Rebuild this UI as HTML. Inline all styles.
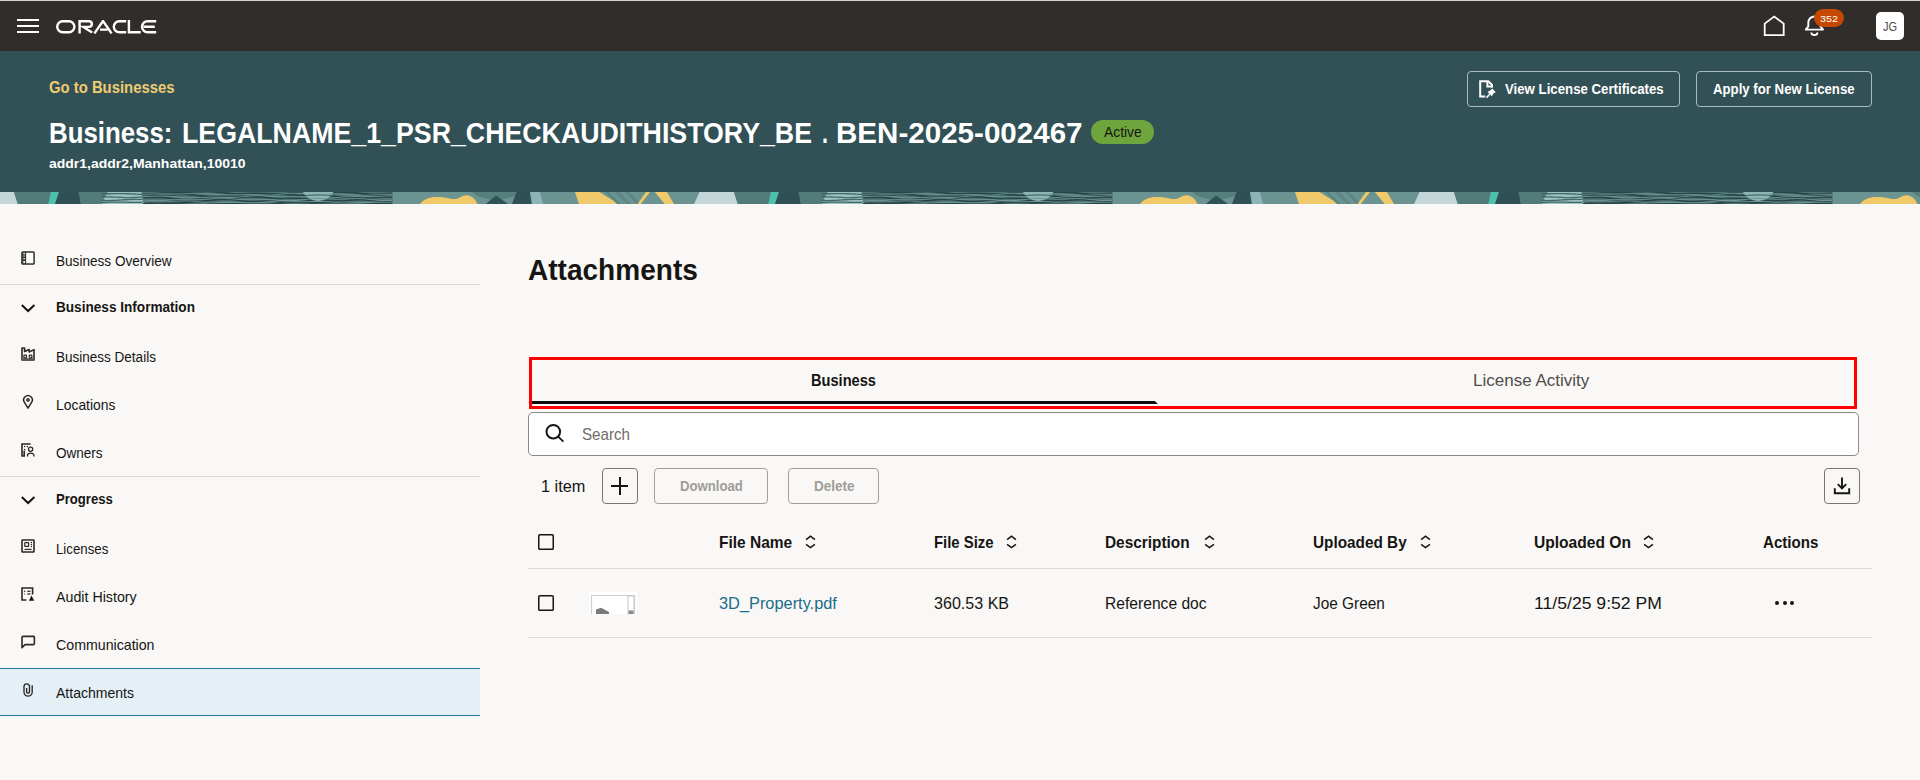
<!DOCTYPE html>
<html><head><meta charset="utf-8"><style>
html,body{margin:0;padding:0}
body{width:1920px;height:780px;overflow:hidden;position:relative;background:#f9f8f6;font-family:"Liberation Sans",sans-serif}
.t{position:absolute;white-space:nowrap;line-height:normal;transform-origin:0 0;display:inline-block}
.a{position:absolute;display:block}
.box{position:absolute;box-sizing:border-box}
</style></head><body>
<div class="box" style="left:0;top:0;width:1920px;height:1px;background:#d3d3d3"></div>
<div class="box" style="left:0;top:1px;width:1920px;height:50px;background:#312d2a"></div>
<div class="box" style="left:17px;top:19px;width:22px;height:2px;background:#fff"></div>
<div class="box" style="left:17px;top:25px;width:22px;height:2px;background:#fff"></div>
<div class="box" style="left:17px;top:31px;width:22px;height:2px;background:#fff"></div>
<!-- ORACLE logo -->
<svg class="a" style="left:56px;top:20px" width="101" height="14" viewBox="0 0 101 14">
 <g fill="none" stroke="#fff" stroke-width="2.4">
  <rect x="1.2" y="1.2" width="17.2" height="11" rx="5.5"/>
  <path d="M23.6 13.4 V1.2 H33 A2.85 2.85 0 0 1 33 6.9 H27.2 L36.2 12.6"/>
  <path d="M38.4 13.4 L47 1 L55.6 13.4 M44 9.6 H51.6"/>
  <path d="M70.2 1.2 H63.3 A5.5 5.5 0 0 0 63.3 12.2 H70.2"/>
  <path d="M72.9 0 V12.2 H84.7"/>
  <path d="M100.2 1.2 H91.5 A5.5 5.5 0 0 0 91.5 12.2 H100.2 M87.6 6.7 H98.8"/>
 </g>
</svg>
<!-- home -->
<svg class="a" style="left:1763px;top:15px" width="23" height="22" viewBox="0 0 23 22">
 <path d="M1.7 20.1 V8.6 L11.2 1.6 L20.7 8.6 V20.1 Z" fill="none" stroke="#fff" stroke-width="1.8"/>
</svg>
<!-- bell -->
<svg class="a" style="left:1804px;top:14px" width="22" height="23" viewBox="0 0 22 23">
 <path d="M1.8 15.6 L4.3 12.4 V8.6 A6.1 6.1 0 0 1 16.5 8.6 V12.4 L19 15.6 Z" fill="none" stroke="#fff" stroke-width="1.9" stroke-linejoin="round"/>
 <path d="M7.4 18.4 A3 2.6 0 0 0 13.4 18.4" fill="none" stroke="#fff" stroke-width="1.9"/>
</svg>
<div class="box" style="left:1814px;top:9px;width:30px;height:18px;border-radius:9px;background:#c74800"></div>
<span class="t" style="left:1820px;top:13.2px;font-size:9.8px;color:#fff;transform:scaleX(1.1)">352</span>
<div class="box" style="left:1876px;top:12px;width:28px;height:28px;border-radius:5px;background:#fff"></div>
<span class="t" style="left:1882.8px;top:20px;font-size:12.5px;color:#4b4b4b;transform:scaleX(0.88)">JG</span>
<!-- header -->
<div class="box" style="left:0;top:51px;width:1920px;height:141px;background:#325156"></div>
<div class="box" style="left:1467px;top:71px;width:213px;height:36px;border:1px solid #a9bcbd;border-radius:4px"></div>
<div class="box" style="left:1696px;top:71px;width:176px;height:36px;border:1px solid #a9bcbd;border-radius:4px"></div>
<svg class="a" style="left:1478px;top:79px" width="19" height="20" viewBox="0 0 19 20">
 <path d="M7.3 17.6 H2.2 V2.2 H10.3 L14 5.9 V8.6" fill="none" stroke="#fff" stroke-width="2"/>
 <path d="M9.4 2.6 V7.5 H14.4" fill="none" stroke="#fff" stroke-width="2"/>
 <polygon points="14.2,9.6 17.8,13.2 15.9,14.1 13.8,17.2 9.6,13.1 12.8,11.1" fill="#fff"/>
 <path d="M11.6 15.2 L8.6 18.6" stroke="#fff" stroke-width="1.6"/>
</svg>
<div class="box" style="left:1091px;top:120px;width:63px;height:24px;border-radius:12px;background:#6ea53c"></div>
<!-- band -->
<svg class="a" style="left:0;top:192px" width="1920" height="12" viewBox="0 0 1920 12"><g transform="translate(0,0)"><rect x="0" y="0" width="720" height="12" fill="#6a9391"/><polygon points="699.8,0 734,0 737.8,12 694.2,12" fill="#c3d7d9"/><polygon points="-20.2,0 14,0 17.8,12 -25.8,12" fill="#c3d7d9"/><polygon points="14,0 51,0 48.3,12 17.8,12" fill="#527a78"/><polygon points="51,0 59,0 55,12 48.3,12" fill="#4dbfad"/><polygon points="59,0 78.7,0 81,12 55,12" fill="#2f5155"/><polygon points="78.7,0 107.8,0 101.2,12 81,12" fill="#527a78"/><polygon points="107.8,0 141.6,0 144.4,12 101.2,12" fill="#9cc0c0"/><polygon points="141.6,0 392.8,0 392.8,12 144.4,12" fill="#4d7675"/><path d="M101.0,1.67 L104.0,1.74 L107.0,1.76 L110.0,1.74 L113.0,1.70 L116.0,1.66 L119.0,1.62 L122.0,1.62 L125.0,1.65 L128.0,1.73 L131.0,1.85 L134.0,2.01 L137.0,2.18 L140.0,2.34 L143.0,2.48" stroke="#44696a" stroke-width="1.3" fill="none"/><path d="M101.0,4.74 L104.0,4.75 L107.0,4.80 L110.0,4.90 L113.0,5.03 L116.0,5.18 L119.0,5.33 L122.0,5.46 L125.0,5.55 L128.0,5.59 L131.0,5.56 L134.0,5.48 L137.0,5.34 L140.0,5.17 L143.0,4.99" stroke="#44696a" stroke-width="1.3" fill="none"/><path d="M101.0,8.43 L104.0,8.51 L107.0,8.55 L110.0,8.53 L113.0,8.45 L116.0,8.31 L119.0,8.13 L122.0,7.94 L125.0,7.75 L128.0,7.59 L131.0,7.47 L134.0,7.40 L137.0,7.38 L140.0,7.40 L143.0,7.45" stroke="#44696a" stroke-width="1.3" fill="none"/><path d="M101.0,10.69 L104.0,10.50 L107.0,10.32 L110.0,10.18 L113.0,10.10 L116.0,10.07 L119.0,10.08 L122.0,10.14 L125.0,10.22 L128.0,10.30 L131.0,10.36 L134.0,10.40 L137.0,10.39 L140.0,10.35 L143.0,10.29" stroke="#44696a" stroke-width="1.3" fill="none"/><path d="M143.0,2.44 L146.0,2.37 L149.0,2.20 L152.0,1.94 L155.0,1.64 L158.0,1.33 L161.0,1.05 L164.0,0.82 L167.0,0.68 L170.0,0.61 L173.0,0.63 L176.0,0.69 L179.0,0.77 L182.0,0.85 L185.0,0.88 L188.0,0.85 L191.0,0.75 L194.0,0.57 L197.0,0.36 L200.0,0.12 L203.0,-0.09 L206.0,-0.25 L209.0,-0.33 L212.0,-0.30 L215.0,-0.16 L218.0,0.07 L221.0,0.38 L224.0,0.73 L227.0,1.07 L230.0,1.38 L233.0,1.61 L236.0,1.76 L239.0,1.81 L242.0,1.78 L245.0,1.68 L248.0,1.56 L251.0,1.44 L254.0,1.36 L257.0,1.34 L260.0,1.39 L263.0,1.50 L266.0,1.65 L269.0,1.82 L272.0,1.96 L275.0,2.06 L278.0,2.07 L281.0,1.98 L284.0,1.80 L287.0,1.52 L290.0,1.19 L293.0,0.83 L296.0,0.48 L299.0,0.18 L302.0,-0.03 L305.0,-0.14 L308.0,-0.15 L311.0,-0.06 L314.0,0.09 L317.0,0.27 L320.0,0.45 L323.0,0.59 L326.0,0.67 L329.0,0.69 L332.0,0.64 L335.0,0.55 L338.0,0.44 L341.0,0.34 L344.0,0.29 L347.0,0.32 L350.0,0.44 L353.0,0.64 L356.0,0.92 L359.0,1.26 L362.0,1.60 L365.0,1.91 L368.0,2.17 L371.0,2.32 L374.0,2.37 L377.0,2.32 L380.0,2.16 L383.0,1.95 L386.0,1.70 L389.0,1.45 L392.0,1.25" stroke="#284547" stroke-width="1.7" fill="none"/><path d="M143.0,2.93 L146.0,2.93 L149.0,2.99 L152.0,3.09 L155.0,3.20 L158.0,3.28 L161.0,3.30 L164.0,3.26 L167.0,3.16 L170.0,3.00 L173.0,2.81 L176.0,2.63 L179.0,2.49 L182.0,2.43 L185.0,2.46 L188.0,2.60 L191.0,2.84 L194.0,3.15 L197.0,3.50 L200.0,3.86 L203.0,4.18 L206.0,4.44 L209.0,4.60 L212.0,4.66 L215.0,4.62 L218.0,4.51 L221.0,4.36 L224.0,4.20 L227.0,4.06 L230.0,3.97 L233.0,3.95 L236.0,3.99 L239.0,4.09 L242.0,4.21 L245.0,4.33 L248.0,4.42 L251.0,4.43 L254.0,4.35 L257.0,4.18 L260.0,3.92 L263.0,3.60 L266.0,3.25 L269.0,2.91 L272.0,2.62 L275.0,2.40 L278.0,2.29 L281.0,2.29 L284.0,2.39 L287.0,2.57 L290.0,2.79 L293.0,3.02 L296.0,3.22 L299.0,3.37 L302.0,3.45 L305.0,3.46 L308.0,3.41 L311.0,3.33 L314.0,3.24 L317.0,3.19 L320.0,3.20 L323.0,3.28 L326.0,3.45 L329.0,3.70 L332.0,4.00 L335.0,4.31 L338.0,4.61 L341.0,4.85 L344.0,4.99 L347.0,5.04 L350.0,4.96 L353.0,4.79 L356.0,4.55 L359.0,4.26 L362.0,3.97 L365.0,3.71 L368.0,3.52 L371.0,3.40 L374.0,3.36 L377.0,3.39 L380.0,3.46 L383.0,3.54 L386.0,3.59 L389.0,3.60 L392.0,3.53" stroke="#284547" stroke-width="1.7" fill="none"/><path d="M143.0,5.70 L146.0,5.56 L149.0,5.42 L152.0,5.30 L155.0,5.25 L158.0,5.28 L161.0,5.41 L164.0,5.63 L167.0,5.93 L170.0,6.28 L173.0,6.64 L176.0,6.97 L179.0,7.23 L182.0,7.39 L185.0,7.45 L188.0,7.41 L191.0,7.28 L194.0,7.09 L197.0,6.88 L200.0,6.69 L203.0,6.54 L206.0,6.45 L209.0,6.43 L212.0,6.47 L215.0,6.56 L218.0,6.66 L221.0,6.73 L224.0,6.75 L227.0,6.69 L230.0,6.55 L233.0,6.32 L236.0,6.03 L239.0,5.71 L242.0,5.38 L245.0,5.10 L248.0,4.90 L251.0,4.79 L254.0,4.80 L257.0,4.91 L260.0,5.12 L263.0,5.37 L266.0,5.65 L269.0,5.90 L272.0,6.11 L275.0,6.25 L278.0,6.31 L281.0,6.30 L284.0,6.24 L287.0,6.16 L290.0,6.09 L293.0,6.07 L296.0,6.12 L299.0,6.25 L302.0,6.45 L305.0,6.70 L308.0,6.97 L311.0,7.24 L314.0,7.46 L317.0,7.59 L320.0,7.62 L323.0,7.54 L326.0,7.35 L329.0,7.08 L332.0,6.76 L335.0,6.44 L338.0,6.14 L341.0,5.90 L344.0,5.74 L347.0,5.67 L350.0,5.68 L353.0,5.75 L356.0,5.84 L359.0,5.93 L362.0,5.98 L365.0,5.97 L368.0,5.89 L371.0,5.74 L374.0,5.55 L377.0,5.34 L380.0,5.14 L383.0,5.00 L386.0,4.94 L389.0,4.98 L392.0,5.13" stroke="#284547" stroke-width="1.7" fill="none"/><path d="M143.0,9.05 L146.0,9.39 L149.0,9.71 L152.0,9.96 L155.0,10.13 L158.0,10.18 L161.0,10.13 L164.0,9.98 L167.0,9.76 L170.0,9.51 L173.0,9.26 L176.0,9.05 L179.0,8.90 L182.0,8.82 L185.0,8.82 L188.0,8.87 L191.0,8.95 L194.0,9.02 L197.0,9.06 L200.0,9.03 L203.0,8.93 L206.0,8.74 L209.0,8.49 L212.0,8.20 L215.0,7.91 L218.0,7.65 L221.0,7.46 L224.0,7.37 L227.0,7.39 L230.0,7.52 L233.0,7.74 L236.0,8.02 L239.0,8.34 L242.0,8.64 L245.0,8.89 L248.0,9.08 L251.0,9.18 L254.0,9.20 L257.0,9.15 L260.0,9.07 L263.0,8.99 L266.0,8.93 L269.0,8.93 L272.0,9.00 L275.0,9.14 L278.0,9.34 L281.0,9.57 L284.0,9.80 L287.0,9.99 L290.0,10.11 L293.0,10.12 L296.0,10.03 L299.0,9.84 L302.0,9.56 L305.0,9.22 L308.0,8.87 L311.0,8.54 L314.0,8.27 L317.0,8.09 L320.0,7.99 L323.0,7.99 L326.0,8.06 L329.0,8.18 L332.0,8.30 L335.0,8.40 L338.0,8.45 L341.0,8.44 L344.0,8.36 L347.0,8.23 L350.0,8.06 L353.0,7.90 L356.0,7.78 L359.0,7.73 L362.0,7.77 L365.0,7.91 L368.0,8.15 L371.0,8.46 L374.0,8.82 L377.0,9.18 L380.0,9.50 L383.0,9.75 L386.0,9.91 L389.0,9.96 L392.0,9.91" stroke="#284547" stroke-width="1.7" fill="none"/><path d="M143.0,11.87 L146.0,11.57 L149.0,11.31 L152.0,11.11 L155.0,10.98 L158.0,10.94 L161.0,10.96 L164.0,11.03 L167.0,11.11 L170.0,11.17 L173.0,11.18 L176.0,11.12 L179.0,10.99 L182.0,10.79 L185.0,10.55 L188.0,10.30 L191.0,10.07 L194.0,9.90 L197.0,9.82 L200.0,9.85 L203.0,9.99 L206.0,10.23 L209.0,10.53 L212.0,10.87 L215.0,11.21 L218.0,11.50 L221.0,11.72 L224.0,11.85 L227.0,11.89 L230.0,11.85 L233.0,11.76 L236.0,11.66 L239.0,11.56 L242.0,11.50 L245.0,11.51 L248.0,11.59 L251.0,11.73 L254.0,11.90 L257.0,12.09 L260.0,12.25 L263.0,12.35 L266.0,12.36 L269.0,12.27 L272.0,12.07 L275.0,11.79 L278.0,11.45 L281.0,11.09 L284.0,10.75 L287.0,10.46 L290.0,10.26 L293.0,10.15 L296.0,10.15 L299.0,10.23 L302.0,10.36 L305.0,10.53 L308.0,10.68 L311.0,10.80 L314.0,10.85 L317.0,10.84 L320.0,10.76 L323.0,10.65 L326.0,10.52 L329.0,10.42 L332.0,10.38 L335.0,10.41 L338.0,10.54 L341.0,10.76 L344.0,11.05 L347.0,11.40 L350.0,11.75 L353.0,12.07 L356.0,12.32 L359.0,12.48 L362.0,12.52 L365.0,12.47 L368.0,12.32 L371.0,12.12 L374.0,11.89 L377.0,11.67 L380.0,11.49 L383.0,11.37 L386.0,11.33 L389.0,11.36 L392.0,11.43" stroke="#284547" stroke-width="1.7" fill="none"/><path d="M143.0,2.92 L146.0,2.63 L149.0,2.35 L152.0,2.12 L155.0,1.95 L158.0,1.86 L161.0,1.85 L164.0,1.89 L167.0,1.97 L170.0,2.05 L173.0,2.11 L176.0,2.12 L179.0,2.06 L182.0,1.95 L185.0,1.79 L188.0,1.60 L191.0,1.41 L194.0,1.26 L197.0,1.18 L200.0,1.18 L203.0,1.27 L206.0,1.46 L209.0,1.72 L212.0,2.03 L215.0,2.34 L218.0,2.64 L221.0,2.87 L224.0,3.03 L227.0,3.11 L230.0,3.10 L233.0,3.03 L236.0,2.91 L239.0,2.79 L242.0,2.69 L245.0,2.63 L248.0,2.63 L251.0,2.68 L254.0,2.79 L257.0,2.92 L260.0,3.05 L263.0,3.14 L266.0,3.17 L269.0,3.13 L272.0,2.99 L275.0,2.77 L278.0,2.49 L281.0,2.17 L284.0,1.86 L287.0,1.58 L290.0,1.37 L293.0,1.24 L296.0,1.21 L299.0,1.26 L302.0,1.39 L305.0,1.56 L308.0,1.74 L311.0,1.90 L314.0,2.02 L317.0,2.07 L320.0,2.07 L323.0,2.01 L326.0,1.93 L329.0,1.84 L332.0,1.79 L335.0,1.78 L338.0,1.85 L341.0,2.00 L344.0,2.22 L347.0,2.50 L350.0,2.79 L353.0,3.08 L356.0,3.32 L359.0,3.48 L362.0,3.55 L365.0,3.52 L368.0,3.40 L371.0,3.21 L374.0,2.98 L377.0,2.74 L380.0,2.53 L383.0,2.37 L386.0,2.27 L389.0,2.23 L392.0,2.26" stroke="#7ea3a3" stroke-width="0.7" fill="none"/><path d="M143.0,4.58 L146.0,4.54 L149.0,4.44 L152.0,4.31 L155.0,4.18 L158.0,4.06 L161.0,4.01 L164.0,4.03 L167.0,4.13 L170.0,4.33 L173.0,4.59 L176.0,4.90 L179.0,5.22 L182.0,5.51 L185.0,5.75 L188.0,5.91 L191.0,5.98 L194.0,5.95 L197.0,5.85 L200.0,5.69 L203.0,5.52 L206.0,5.35 L209.0,5.22 L212.0,5.15 L215.0,5.14 L218.0,5.18 L221.0,5.27 L224.0,5.36 L227.0,5.43 L230.0,5.45 L233.0,5.41 L236.0,5.28 L239.0,5.08 L242.0,4.82 L245.0,4.52 L248.0,4.23 L251.0,3.97 L254.0,3.78 L257.0,3.67 L260.0,3.66 L263.0,3.75 L266.0,3.92 L269.0,4.13 L272.0,4.37 L275.0,4.59 L278.0,4.77 L281.0,4.89 L284.0,4.94 L287.0,4.93 L290.0,4.87 L293.0,4.80 L296.0,4.75 L299.0,4.73 L302.0,4.77 L305.0,4.89 L308.0,5.07 L311.0,5.30 L314.0,5.55 L317.0,5.80 L320.0,6.00 L323.0,6.13 L326.0,6.17 L329.0,6.11 L332.0,5.96 L335.0,5.73 L338.0,5.46 L341.0,5.17 L344.0,4.91 L347.0,4.70 L350.0,4.56 L353.0,4.49 L356.0,4.50 L359.0,4.55 L362.0,4.63 L365.0,4.70 L368.0,4.74 L371.0,4.73 L374.0,4.65 L377.0,4.52 L380.0,4.34 L383.0,4.14 L386.0,3.96 L389.0,3.82 L392.0,3.75" stroke="#7ea3a3" stroke-width="0.7" fill="none"/><path d="M143.0,8.06 L146.0,8.34 L149.0,8.56 L152.0,8.70 L155.0,8.74 L158.0,8.68 L161.0,8.54 L164.0,8.34 L167.0,8.11 L170.0,7.89 L173.0,7.70 L176.0,7.56 L179.0,7.49 L182.0,7.49 L185.0,7.53 L188.0,7.60 L191.0,7.67 L194.0,7.70 L197.0,7.67 L200.0,7.58 L203.0,7.42 L206.0,7.20 L209.0,6.94 L212.0,6.69 L215.0,6.46 L218.0,6.30 L221.0,6.23 L224.0,6.25 L227.0,6.37 L230.0,6.58 L233.0,6.83 L236.0,7.12 L239.0,7.39 L242.0,7.61 L245.0,7.78 L248.0,7.87 L251.0,7.88 L254.0,7.84 L257.0,7.77 L260.0,7.69 L263.0,7.64 L266.0,7.64 L269.0,7.70 L272.0,7.82 L275.0,8.00 L278.0,8.20 L281.0,8.39 L284.0,8.55 L287.0,8.65 L290.0,8.66 L293.0,8.57 L296.0,8.40 L299.0,8.14 L302.0,7.84 L305.0,7.53 L308.0,7.24 L311.0,7.00 L314.0,6.83 L317.0,6.75 L320.0,6.76 L323.0,6.82 L326.0,6.93 L329.0,7.04 L332.0,7.14 L335.0,7.19 L338.0,7.18 L341.0,7.11 L344.0,6.99 L347.0,6.85 L350.0,6.71 L353.0,6.61 L356.0,6.57 L359.0,6.61 L362.0,6.74 L365.0,6.96 L368.0,7.24 L371.0,7.56 L374.0,7.87 L377.0,8.16 L380.0,8.38 L383.0,8.51 L386.0,8.55 L389.0,8.51 L392.0,8.39" stroke="#7ea3a3" stroke-width="0.7" fill="none"/><path d="M143.0,9.68 L146.0,9.64 L149.0,9.67 L152.0,9.73 L155.0,9.81 L158.0,9.87 L161.0,9.88 L164.0,9.84 L167.0,9.73 L170.0,9.57 L173.0,9.37 L176.0,9.17 L179.0,8.99 L182.0,8.86 L185.0,8.82 L188.0,8.87 L191.0,9.02 L194.0,9.25 L197.0,9.54 L200.0,9.85 L203.0,10.15 L206.0,10.41 L209.0,10.60 L212.0,10.70 L215.0,10.73 L218.0,10.68 L221.0,10.59 L224.0,10.48 L227.0,10.38 L230.0,10.32 L233.0,10.31 L236.0,10.36 L239.0,10.47 L242.0,10.61 L245.0,10.76 L248.0,10.88 L251.0,10.94 L254.0,10.93 L257.0,10.83 L260.0,10.64 L263.0,10.38 L266.0,10.07 L269.0,9.75 L272.0,9.45 L275.0,9.21 L278.0,9.04 L281.0,8.97 L284.0,8.99 L287.0,9.08 L290.0,9.22 L293.0,9.39 L296.0,9.54 L299.0,9.66 L302.0,9.72 L305.0,9.72 L308.0,9.67 L311.0,9.58 L314.0,9.48 L317.0,9.41 L320.0,9.38 L323.0,9.43 L326.0,9.55 L329.0,9.75 L332.0,10.02 L335.0,10.32 L338.0,10.62 L341.0,10.88 L344.0,11.09 L347.0,11.20 L350.0,11.22 L353.0,11.14 L356.0,10.99 L359.0,10.78 L362.0,10.56 L365.0,10.35 L368.0,10.18 L371.0,10.07 L374.0,10.02 L377.0,10.04 L380.0,10.09 L383.0,10.17 L386.0,10.22 L389.0,10.24 L392.0,10.19" stroke="#7ea3a3" stroke-width="0.7" fill="none"/><path d="M302.8 0 H333.7 Q 328 8.6 318 9 Q 308 8.6 302.8 0 Z" fill="#8fb4b4"/><path d="M305 3.6 Q 318 2.2 332 3.4" stroke="#46706f" stroke-width="1.2" fill="none"/><path d="M309 6.6 Q 318 6 328 6.6" stroke="#6b9595" stroke-width="0.9" fill="none"/><polygon points="471.5,0 515.6,0 515.6,4 495,8.5 480,5" fill="#557e7c"/><path d="M420 12 C 424 6, 432 4.6, 440 5 C 447 5.4, 451 7.4, 455 7 C 460 6.4, 462 3, 467 3.2 C 472 3.6, 476 8, 477.5 12 Z" fill="#f0c96a"/><polygon points="485.7,12 496,3.5 508,12" fill="#2f5155"/><polygon points="516.5,0 530,0 531.5,12 512,12" fill="#2f5155"/><polygon points="530,0 540,0 543,12 532.4,12" fill="#8db4b7"/><polygon points="575,0 599.5,0 618.7,12 579,12" fill="#f0c96a"/><polygon points="605,0 609,0 621,12 617,12" fill="#5b8684"/><polygon points="615,0 619,0 631,12 627,12" fill="#5b8684"/><polygon points="625,0 629,0 641,12 637,12" fill="#5b8684"/><polygon points="646,0 650,0 640.7,12 637.5,12" fill="#f0c96a"/><polygon points="654.8,0 667,0 674,12 664.7,12" fill="#f0c96a"/></g><g transform="translate(720,0)"><rect x="0" y="0" width="720" height="12" fill="#6a9391"/><polygon points="699.8,0 734,0 737.8,12 694.2,12" fill="#c3d7d9"/><polygon points="-20.2,0 14,0 17.8,12 -25.8,12" fill="#c3d7d9"/><polygon points="14,0 51,0 48.3,12 17.8,12" fill="#527a78"/><polygon points="51,0 59,0 55,12 48.3,12" fill="#4dbfad"/><polygon points="59,0 78.7,0 81,12 55,12" fill="#2f5155"/><polygon points="78.7,0 107.8,0 101.2,12 81,12" fill="#527a78"/><polygon points="107.8,0 141.6,0 144.4,12 101.2,12" fill="#9cc0c0"/><polygon points="141.6,0 392.8,0 392.8,12 144.4,12" fill="#4d7675"/><path d="M101.0,1.67 L104.0,1.74 L107.0,1.76 L110.0,1.74 L113.0,1.70 L116.0,1.66 L119.0,1.62 L122.0,1.62 L125.0,1.65 L128.0,1.73 L131.0,1.85 L134.0,2.01 L137.0,2.18 L140.0,2.34 L143.0,2.48" stroke="#44696a" stroke-width="1.3" fill="none"/><path d="M101.0,4.74 L104.0,4.75 L107.0,4.80 L110.0,4.90 L113.0,5.03 L116.0,5.18 L119.0,5.33 L122.0,5.46 L125.0,5.55 L128.0,5.59 L131.0,5.56 L134.0,5.48 L137.0,5.34 L140.0,5.17 L143.0,4.99" stroke="#44696a" stroke-width="1.3" fill="none"/><path d="M101.0,8.43 L104.0,8.51 L107.0,8.55 L110.0,8.53 L113.0,8.45 L116.0,8.31 L119.0,8.13 L122.0,7.94 L125.0,7.75 L128.0,7.59 L131.0,7.47 L134.0,7.40 L137.0,7.38 L140.0,7.40 L143.0,7.45" stroke="#44696a" stroke-width="1.3" fill="none"/><path d="M101.0,10.69 L104.0,10.50 L107.0,10.32 L110.0,10.18 L113.0,10.10 L116.0,10.07 L119.0,10.08 L122.0,10.14 L125.0,10.22 L128.0,10.30 L131.0,10.36 L134.0,10.40 L137.0,10.39 L140.0,10.35 L143.0,10.29" stroke="#44696a" stroke-width="1.3" fill="none"/><path d="M143.0,2.44 L146.0,2.37 L149.0,2.20 L152.0,1.94 L155.0,1.64 L158.0,1.33 L161.0,1.05 L164.0,0.82 L167.0,0.68 L170.0,0.61 L173.0,0.63 L176.0,0.69 L179.0,0.77 L182.0,0.85 L185.0,0.88 L188.0,0.85 L191.0,0.75 L194.0,0.57 L197.0,0.36 L200.0,0.12 L203.0,-0.09 L206.0,-0.25 L209.0,-0.33 L212.0,-0.30 L215.0,-0.16 L218.0,0.07 L221.0,0.38 L224.0,0.73 L227.0,1.07 L230.0,1.38 L233.0,1.61 L236.0,1.76 L239.0,1.81 L242.0,1.78 L245.0,1.68 L248.0,1.56 L251.0,1.44 L254.0,1.36 L257.0,1.34 L260.0,1.39 L263.0,1.50 L266.0,1.65 L269.0,1.82 L272.0,1.96 L275.0,2.06 L278.0,2.07 L281.0,1.98 L284.0,1.80 L287.0,1.52 L290.0,1.19 L293.0,0.83 L296.0,0.48 L299.0,0.18 L302.0,-0.03 L305.0,-0.14 L308.0,-0.15 L311.0,-0.06 L314.0,0.09 L317.0,0.27 L320.0,0.45 L323.0,0.59 L326.0,0.67 L329.0,0.69 L332.0,0.64 L335.0,0.55 L338.0,0.44 L341.0,0.34 L344.0,0.29 L347.0,0.32 L350.0,0.44 L353.0,0.64 L356.0,0.92 L359.0,1.26 L362.0,1.60 L365.0,1.91 L368.0,2.17 L371.0,2.32 L374.0,2.37 L377.0,2.32 L380.0,2.16 L383.0,1.95 L386.0,1.70 L389.0,1.45 L392.0,1.25" stroke="#284547" stroke-width="1.7" fill="none"/><path d="M143.0,2.93 L146.0,2.93 L149.0,2.99 L152.0,3.09 L155.0,3.20 L158.0,3.28 L161.0,3.30 L164.0,3.26 L167.0,3.16 L170.0,3.00 L173.0,2.81 L176.0,2.63 L179.0,2.49 L182.0,2.43 L185.0,2.46 L188.0,2.60 L191.0,2.84 L194.0,3.15 L197.0,3.50 L200.0,3.86 L203.0,4.18 L206.0,4.44 L209.0,4.60 L212.0,4.66 L215.0,4.62 L218.0,4.51 L221.0,4.36 L224.0,4.20 L227.0,4.06 L230.0,3.97 L233.0,3.95 L236.0,3.99 L239.0,4.09 L242.0,4.21 L245.0,4.33 L248.0,4.42 L251.0,4.43 L254.0,4.35 L257.0,4.18 L260.0,3.92 L263.0,3.60 L266.0,3.25 L269.0,2.91 L272.0,2.62 L275.0,2.40 L278.0,2.29 L281.0,2.29 L284.0,2.39 L287.0,2.57 L290.0,2.79 L293.0,3.02 L296.0,3.22 L299.0,3.37 L302.0,3.45 L305.0,3.46 L308.0,3.41 L311.0,3.33 L314.0,3.24 L317.0,3.19 L320.0,3.20 L323.0,3.28 L326.0,3.45 L329.0,3.70 L332.0,4.00 L335.0,4.31 L338.0,4.61 L341.0,4.85 L344.0,4.99 L347.0,5.04 L350.0,4.96 L353.0,4.79 L356.0,4.55 L359.0,4.26 L362.0,3.97 L365.0,3.71 L368.0,3.52 L371.0,3.40 L374.0,3.36 L377.0,3.39 L380.0,3.46 L383.0,3.54 L386.0,3.59 L389.0,3.60 L392.0,3.53" stroke="#284547" stroke-width="1.7" fill="none"/><path d="M143.0,5.70 L146.0,5.56 L149.0,5.42 L152.0,5.30 L155.0,5.25 L158.0,5.28 L161.0,5.41 L164.0,5.63 L167.0,5.93 L170.0,6.28 L173.0,6.64 L176.0,6.97 L179.0,7.23 L182.0,7.39 L185.0,7.45 L188.0,7.41 L191.0,7.28 L194.0,7.09 L197.0,6.88 L200.0,6.69 L203.0,6.54 L206.0,6.45 L209.0,6.43 L212.0,6.47 L215.0,6.56 L218.0,6.66 L221.0,6.73 L224.0,6.75 L227.0,6.69 L230.0,6.55 L233.0,6.32 L236.0,6.03 L239.0,5.71 L242.0,5.38 L245.0,5.10 L248.0,4.90 L251.0,4.79 L254.0,4.80 L257.0,4.91 L260.0,5.12 L263.0,5.37 L266.0,5.65 L269.0,5.90 L272.0,6.11 L275.0,6.25 L278.0,6.31 L281.0,6.30 L284.0,6.24 L287.0,6.16 L290.0,6.09 L293.0,6.07 L296.0,6.12 L299.0,6.25 L302.0,6.45 L305.0,6.70 L308.0,6.97 L311.0,7.24 L314.0,7.46 L317.0,7.59 L320.0,7.62 L323.0,7.54 L326.0,7.35 L329.0,7.08 L332.0,6.76 L335.0,6.44 L338.0,6.14 L341.0,5.90 L344.0,5.74 L347.0,5.67 L350.0,5.68 L353.0,5.75 L356.0,5.84 L359.0,5.93 L362.0,5.98 L365.0,5.97 L368.0,5.89 L371.0,5.74 L374.0,5.55 L377.0,5.34 L380.0,5.14 L383.0,5.00 L386.0,4.94 L389.0,4.98 L392.0,5.13" stroke="#284547" stroke-width="1.7" fill="none"/><path d="M143.0,9.05 L146.0,9.39 L149.0,9.71 L152.0,9.96 L155.0,10.13 L158.0,10.18 L161.0,10.13 L164.0,9.98 L167.0,9.76 L170.0,9.51 L173.0,9.26 L176.0,9.05 L179.0,8.90 L182.0,8.82 L185.0,8.82 L188.0,8.87 L191.0,8.95 L194.0,9.02 L197.0,9.06 L200.0,9.03 L203.0,8.93 L206.0,8.74 L209.0,8.49 L212.0,8.20 L215.0,7.91 L218.0,7.65 L221.0,7.46 L224.0,7.37 L227.0,7.39 L230.0,7.52 L233.0,7.74 L236.0,8.02 L239.0,8.34 L242.0,8.64 L245.0,8.89 L248.0,9.08 L251.0,9.18 L254.0,9.20 L257.0,9.15 L260.0,9.07 L263.0,8.99 L266.0,8.93 L269.0,8.93 L272.0,9.00 L275.0,9.14 L278.0,9.34 L281.0,9.57 L284.0,9.80 L287.0,9.99 L290.0,10.11 L293.0,10.12 L296.0,10.03 L299.0,9.84 L302.0,9.56 L305.0,9.22 L308.0,8.87 L311.0,8.54 L314.0,8.27 L317.0,8.09 L320.0,7.99 L323.0,7.99 L326.0,8.06 L329.0,8.18 L332.0,8.30 L335.0,8.40 L338.0,8.45 L341.0,8.44 L344.0,8.36 L347.0,8.23 L350.0,8.06 L353.0,7.90 L356.0,7.78 L359.0,7.73 L362.0,7.77 L365.0,7.91 L368.0,8.15 L371.0,8.46 L374.0,8.82 L377.0,9.18 L380.0,9.50 L383.0,9.75 L386.0,9.91 L389.0,9.96 L392.0,9.91" stroke="#284547" stroke-width="1.7" fill="none"/><path d="M143.0,11.87 L146.0,11.57 L149.0,11.31 L152.0,11.11 L155.0,10.98 L158.0,10.94 L161.0,10.96 L164.0,11.03 L167.0,11.11 L170.0,11.17 L173.0,11.18 L176.0,11.12 L179.0,10.99 L182.0,10.79 L185.0,10.55 L188.0,10.30 L191.0,10.07 L194.0,9.90 L197.0,9.82 L200.0,9.85 L203.0,9.99 L206.0,10.23 L209.0,10.53 L212.0,10.87 L215.0,11.21 L218.0,11.50 L221.0,11.72 L224.0,11.85 L227.0,11.89 L230.0,11.85 L233.0,11.76 L236.0,11.66 L239.0,11.56 L242.0,11.50 L245.0,11.51 L248.0,11.59 L251.0,11.73 L254.0,11.90 L257.0,12.09 L260.0,12.25 L263.0,12.35 L266.0,12.36 L269.0,12.27 L272.0,12.07 L275.0,11.79 L278.0,11.45 L281.0,11.09 L284.0,10.75 L287.0,10.46 L290.0,10.26 L293.0,10.15 L296.0,10.15 L299.0,10.23 L302.0,10.36 L305.0,10.53 L308.0,10.68 L311.0,10.80 L314.0,10.85 L317.0,10.84 L320.0,10.76 L323.0,10.65 L326.0,10.52 L329.0,10.42 L332.0,10.38 L335.0,10.41 L338.0,10.54 L341.0,10.76 L344.0,11.05 L347.0,11.40 L350.0,11.75 L353.0,12.07 L356.0,12.32 L359.0,12.48 L362.0,12.52 L365.0,12.47 L368.0,12.32 L371.0,12.12 L374.0,11.89 L377.0,11.67 L380.0,11.49 L383.0,11.37 L386.0,11.33 L389.0,11.36 L392.0,11.43" stroke="#284547" stroke-width="1.7" fill="none"/><path d="M143.0,2.92 L146.0,2.63 L149.0,2.35 L152.0,2.12 L155.0,1.95 L158.0,1.86 L161.0,1.85 L164.0,1.89 L167.0,1.97 L170.0,2.05 L173.0,2.11 L176.0,2.12 L179.0,2.06 L182.0,1.95 L185.0,1.79 L188.0,1.60 L191.0,1.41 L194.0,1.26 L197.0,1.18 L200.0,1.18 L203.0,1.27 L206.0,1.46 L209.0,1.72 L212.0,2.03 L215.0,2.34 L218.0,2.64 L221.0,2.87 L224.0,3.03 L227.0,3.11 L230.0,3.10 L233.0,3.03 L236.0,2.91 L239.0,2.79 L242.0,2.69 L245.0,2.63 L248.0,2.63 L251.0,2.68 L254.0,2.79 L257.0,2.92 L260.0,3.05 L263.0,3.14 L266.0,3.17 L269.0,3.13 L272.0,2.99 L275.0,2.77 L278.0,2.49 L281.0,2.17 L284.0,1.86 L287.0,1.58 L290.0,1.37 L293.0,1.24 L296.0,1.21 L299.0,1.26 L302.0,1.39 L305.0,1.56 L308.0,1.74 L311.0,1.90 L314.0,2.02 L317.0,2.07 L320.0,2.07 L323.0,2.01 L326.0,1.93 L329.0,1.84 L332.0,1.79 L335.0,1.78 L338.0,1.85 L341.0,2.00 L344.0,2.22 L347.0,2.50 L350.0,2.79 L353.0,3.08 L356.0,3.32 L359.0,3.48 L362.0,3.55 L365.0,3.52 L368.0,3.40 L371.0,3.21 L374.0,2.98 L377.0,2.74 L380.0,2.53 L383.0,2.37 L386.0,2.27 L389.0,2.23 L392.0,2.26" stroke="#7ea3a3" stroke-width="0.7" fill="none"/><path d="M143.0,4.58 L146.0,4.54 L149.0,4.44 L152.0,4.31 L155.0,4.18 L158.0,4.06 L161.0,4.01 L164.0,4.03 L167.0,4.13 L170.0,4.33 L173.0,4.59 L176.0,4.90 L179.0,5.22 L182.0,5.51 L185.0,5.75 L188.0,5.91 L191.0,5.98 L194.0,5.95 L197.0,5.85 L200.0,5.69 L203.0,5.52 L206.0,5.35 L209.0,5.22 L212.0,5.15 L215.0,5.14 L218.0,5.18 L221.0,5.27 L224.0,5.36 L227.0,5.43 L230.0,5.45 L233.0,5.41 L236.0,5.28 L239.0,5.08 L242.0,4.82 L245.0,4.52 L248.0,4.23 L251.0,3.97 L254.0,3.78 L257.0,3.67 L260.0,3.66 L263.0,3.75 L266.0,3.92 L269.0,4.13 L272.0,4.37 L275.0,4.59 L278.0,4.77 L281.0,4.89 L284.0,4.94 L287.0,4.93 L290.0,4.87 L293.0,4.80 L296.0,4.75 L299.0,4.73 L302.0,4.77 L305.0,4.89 L308.0,5.07 L311.0,5.30 L314.0,5.55 L317.0,5.80 L320.0,6.00 L323.0,6.13 L326.0,6.17 L329.0,6.11 L332.0,5.96 L335.0,5.73 L338.0,5.46 L341.0,5.17 L344.0,4.91 L347.0,4.70 L350.0,4.56 L353.0,4.49 L356.0,4.50 L359.0,4.55 L362.0,4.63 L365.0,4.70 L368.0,4.74 L371.0,4.73 L374.0,4.65 L377.0,4.52 L380.0,4.34 L383.0,4.14 L386.0,3.96 L389.0,3.82 L392.0,3.75" stroke="#7ea3a3" stroke-width="0.7" fill="none"/><path d="M143.0,8.06 L146.0,8.34 L149.0,8.56 L152.0,8.70 L155.0,8.74 L158.0,8.68 L161.0,8.54 L164.0,8.34 L167.0,8.11 L170.0,7.89 L173.0,7.70 L176.0,7.56 L179.0,7.49 L182.0,7.49 L185.0,7.53 L188.0,7.60 L191.0,7.67 L194.0,7.70 L197.0,7.67 L200.0,7.58 L203.0,7.42 L206.0,7.20 L209.0,6.94 L212.0,6.69 L215.0,6.46 L218.0,6.30 L221.0,6.23 L224.0,6.25 L227.0,6.37 L230.0,6.58 L233.0,6.83 L236.0,7.12 L239.0,7.39 L242.0,7.61 L245.0,7.78 L248.0,7.87 L251.0,7.88 L254.0,7.84 L257.0,7.77 L260.0,7.69 L263.0,7.64 L266.0,7.64 L269.0,7.70 L272.0,7.82 L275.0,8.00 L278.0,8.20 L281.0,8.39 L284.0,8.55 L287.0,8.65 L290.0,8.66 L293.0,8.57 L296.0,8.40 L299.0,8.14 L302.0,7.84 L305.0,7.53 L308.0,7.24 L311.0,7.00 L314.0,6.83 L317.0,6.75 L320.0,6.76 L323.0,6.82 L326.0,6.93 L329.0,7.04 L332.0,7.14 L335.0,7.19 L338.0,7.18 L341.0,7.11 L344.0,6.99 L347.0,6.85 L350.0,6.71 L353.0,6.61 L356.0,6.57 L359.0,6.61 L362.0,6.74 L365.0,6.96 L368.0,7.24 L371.0,7.56 L374.0,7.87 L377.0,8.16 L380.0,8.38 L383.0,8.51 L386.0,8.55 L389.0,8.51 L392.0,8.39" stroke="#7ea3a3" stroke-width="0.7" fill="none"/><path d="M143.0,9.68 L146.0,9.64 L149.0,9.67 L152.0,9.73 L155.0,9.81 L158.0,9.87 L161.0,9.88 L164.0,9.84 L167.0,9.73 L170.0,9.57 L173.0,9.37 L176.0,9.17 L179.0,8.99 L182.0,8.86 L185.0,8.82 L188.0,8.87 L191.0,9.02 L194.0,9.25 L197.0,9.54 L200.0,9.85 L203.0,10.15 L206.0,10.41 L209.0,10.60 L212.0,10.70 L215.0,10.73 L218.0,10.68 L221.0,10.59 L224.0,10.48 L227.0,10.38 L230.0,10.32 L233.0,10.31 L236.0,10.36 L239.0,10.47 L242.0,10.61 L245.0,10.76 L248.0,10.88 L251.0,10.94 L254.0,10.93 L257.0,10.83 L260.0,10.64 L263.0,10.38 L266.0,10.07 L269.0,9.75 L272.0,9.45 L275.0,9.21 L278.0,9.04 L281.0,8.97 L284.0,8.99 L287.0,9.08 L290.0,9.22 L293.0,9.39 L296.0,9.54 L299.0,9.66 L302.0,9.72 L305.0,9.72 L308.0,9.67 L311.0,9.58 L314.0,9.48 L317.0,9.41 L320.0,9.38 L323.0,9.43 L326.0,9.55 L329.0,9.75 L332.0,10.02 L335.0,10.32 L338.0,10.62 L341.0,10.88 L344.0,11.09 L347.0,11.20 L350.0,11.22 L353.0,11.14 L356.0,10.99 L359.0,10.78 L362.0,10.56 L365.0,10.35 L368.0,10.18 L371.0,10.07 L374.0,10.02 L377.0,10.04 L380.0,10.09 L383.0,10.17 L386.0,10.22 L389.0,10.24 L392.0,10.19" stroke="#7ea3a3" stroke-width="0.7" fill="none"/><path d="M302.8 0 H333.7 Q 328 8.6 318 9 Q 308 8.6 302.8 0 Z" fill="#8fb4b4"/><path d="M305 3.6 Q 318 2.2 332 3.4" stroke="#46706f" stroke-width="1.2" fill="none"/><path d="M309 6.6 Q 318 6 328 6.6" stroke="#6b9595" stroke-width="0.9" fill="none"/><polygon points="471.5,0 515.6,0 515.6,4 495,8.5 480,5" fill="#557e7c"/><path d="M420 12 C 424 6, 432 4.6, 440 5 C 447 5.4, 451 7.4, 455 7 C 460 6.4, 462 3, 467 3.2 C 472 3.6, 476 8, 477.5 12 Z" fill="#f0c96a"/><polygon points="485.7,12 496,3.5 508,12" fill="#2f5155"/><polygon points="516.5,0 530,0 531.5,12 512,12" fill="#2f5155"/><polygon points="530,0 540,0 543,12 532.4,12" fill="#8db4b7"/><polygon points="575,0 599.5,0 618.7,12 579,12" fill="#f0c96a"/><polygon points="605,0 609,0 621,12 617,12" fill="#5b8684"/><polygon points="615,0 619,0 631,12 627,12" fill="#5b8684"/><polygon points="625,0 629,0 641,12 637,12" fill="#5b8684"/><polygon points="646,0 650,0 640.7,12 637.5,12" fill="#f0c96a"/><polygon points="654.8,0 667,0 674,12 664.7,12" fill="#f0c96a"/></g><g transform="translate(1440,0)"><rect x="0" y="0" width="720" height="12" fill="#6a9391"/><polygon points="699.8,0 734,0 737.8,12 694.2,12" fill="#c3d7d9"/><polygon points="-20.2,0 14,0 17.8,12 -25.8,12" fill="#c3d7d9"/><polygon points="14,0 51,0 48.3,12 17.8,12" fill="#527a78"/><polygon points="51,0 59,0 55,12 48.3,12" fill="#4dbfad"/><polygon points="59,0 78.7,0 81,12 55,12" fill="#2f5155"/><polygon points="78.7,0 107.8,0 101.2,12 81,12" fill="#527a78"/><polygon points="107.8,0 141.6,0 144.4,12 101.2,12" fill="#9cc0c0"/><polygon points="141.6,0 392.8,0 392.8,12 144.4,12" fill="#4d7675"/><path d="M101.0,1.67 L104.0,1.74 L107.0,1.76 L110.0,1.74 L113.0,1.70 L116.0,1.66 L119.0,1.62 L122.0,1.62 L125.0,1.65 L128.0,1.73 L131.0,1.85 L134.0,2.01 L137.0,2.18 L140.0,2.34 L143.0,2.48" stroke="#44696a" stroke-width="1.3" fill="none"/><path d="M101.0,4.74 L104.0,4.75 L107.0,4.80 L110.0,4.90 L113.0,5.03 L116.0,5.18 L119.0,5.33 L122.0,5.46 L125.0,5.55 L128.0,5.59 L131.0,5.56 L134.0,5.48 L137.0,5.34 L140.0,5.17 L143.0,4.99" stroke="#44696a" stroke-width="1.3" fill="none"/><path d="M101.0,8.43 L104.0,8.51 L107.0,8.55 L110.0,8.53 L113.0,8.45 L116.0,8.31 L119.0,8.13 L122.0,7.94 L125.0,7.75 L128.0,7.59 L131.0,7.47 L134.0,7.40 L137.0,7.38 L140.0,7.40 L143.0,7.45" stroke="#44696a" stroke-width="1.3" fill="none"/><path d="M101.0,10.69 L104.0,10.50 L107.0,10.32 L110.0,10.18 L113.0,10.10 L116.0,10.07 L119.0,10.08 L122.0,10.14 L125.0,10.22 L128.0,10.30 L131.0,10.36 L134.0,10.40 L137.0,10.39 L140.0,10.35 L143.0,10.29" stroke="#44696a" stroke-width="1.3" fill="none"/><path d="M143.0,2.44 L146.0,2.37 L149.0,2.20 L152.0,1.94 L155.0,1.64 L158.0,1.33 L161.0,1.05 L164.0,0.82 L167.0,0.68 L170.0,0.61 L173.0,0.63 L176.0,0.69 L179.0,0.77 L182.0,0.85 L185.0,0.88 L188.0,0.85 L191.0,0.75 L194.0,0.57 L197.0,0.36 L200.0,0.12 L203.0,-0.09 L206.0,-0.25 L209.0,-0.33 L212.0,-0.30 L215.0,-0.16 L218.0,0.07 L221.0,0.38 L224.0,0.73 L227.0,1.07 L230.0,1.38 L233.0,1.61 L236.0,1.76 L239.0,1.81 L242.0,1.78 L245.0,1.68 L248.0,1.56 L251.0,1.44 L254.0,1.36 L257.0,1.34 L260.0,1.39 L263.0,1.50 L266.0,1.65 L269.0,1.82 L272.0,1.96 L275.0,2.06 L278.0,2.07 L281.0,1.98 L284.0,1.80 L287.0,1.52 L290.0,1.19 L293.0,0.83 L296.0,0.48 L299.0,0.18 L302.0,-0.03 L305.0,-0.14 L308.0,-0.15 L311.0,-0.06 L314.0,0.09 L317.0,0.27 L320.0,0.45 L323.0,0.59 L326.0,0.67 L329.0,0.69 L332.0,0.64 L335.0,0.55 L338.0,0.44 L341.0,0.34 L344.0,0.29 L347.0,0.32 L350.0,0.44 L353.0,0.64 L356.0,0.92 L359.0,1.26 L362.0,1.60 L365.0,1.91 L368.0,2.17 L371.0,2.32 L374.0,2.37 L377.0,2.32 L380.0,2.16 L383.0,1.95 L386.0,1.70 L389.0,1.45 L392.0,1.25" stroke="#284547" stroke-width="1.7" fill="none"/><path d="M143.0,2.93 L146.0,2.93 L149.0,2.99 L152.0,3.09 L155.0,3.20 L158.0,3.28 L161.0,3.30 L164.0,3.26 L167.0,3.16 L170.0,3.00 L173.0,2.81 L176.0,2.63 L179.0,2.49 L182.0,2.43 L185.0,2.46 L188.0,2.60 L191.0,2.84 L194.0,3.15 L197.0,3.50 L200.0,3.86 L203.0,4.18 L206.0,4.44 L209.0,4.60 L212.0,4.66 L215.0,4.62 L218.0,4.51 L221.0,4.36 L224.0,4.20 L227.0,4.06 L230.0,3.97 L233.0,3.95 L236.0,3.99 L239.0,4.09 L242.0,4.21 L245.0,4.33 L248.0,4.42 L251.0,4.43 L254.0,4.35 L257.0,4.18 L260.0,3.92 L263.0,3.60 L266.0,3.25 L269.0,2.91 L272.0,2.62 L275.0,2.40 L278.0,2.29 L281.0,2.29 L284.0,2.39 L287.0,2.57 L290.0,2.79 L293.0,3.02 L296.0,3.22 L299.0,3.37 L302.0,3.45 L305.0,3.46 L308.0,3.41 L311.0,3.33 L314.0,3.24 L317.0,3.19 L320.0,3.20 L323.0,3.28 L326.0,3.45 L329.0,3.70 L332.0,4.00 L335.0,4.31 L338.0,4.61 L341.0,4.85 L344.0,4.99 L347.0,5.04 L350.0,4.96 L353.0,4.79 L356.0,4.55 L359.0,4.26 L362.0,3.97 L365.0,3.71 L368.0,3.52 L371.0,3.40 L374.0,3.36 L377.0,3.39 L380.0,3.46 L383.0,3.54 L386.0,3.59 L389.0,3.60 L392.0,3.53" stroke="#284547" stroke-width="1.7" fill="none"/><path d="M143.0,5.70 L146.0,5.56 L149.0,5.42 L152.0,5.30 L155.0,5.25 L158.0,5.28 L161.0,5.41 L164.0,5.63 L167.0,5.93 L170.0,6.28 L173.0,6.64 L176.0,6.97 L179.0,7.23 L182.0,7.39 L185.0,7.45 L188.0,7.41 L191.0,7.28 L194.0,7.09 L197.0,6.88 L200.0,6.69 L203.0,6.54 L206.0,6.45 L209.0,6.43 L212.0,6.47 L215.0,6.56 L218.0,6.66 L221.0,6.73 L224.0,6.75 L227.0,6.69 L230.0,6.55 L233.0,6.32 L236.0,6.03 L239.0,5.71 L242.0,5.38 L245.0,5.10 L248.0,4.90 L251.0,4.79 L254.0,4.80 L257.0,4.91 L260.0,5.12 L263.0,5.37 L266.0,5.65 L269.0,5.90 L272.0,6.11 L275.0,6.25 L278.0,6.31 L281.0,6.30 L284.0,6.24 L287.0,6.16 L290.0,6.09 L293.0,6.07 L296.0,6.12 L299.0,6.25 L302.0,6.45 L305.0,6.70 L308.0,6.97 L311.0,7.24 L314.0,7.46 L317.0,7.59 L320.0,7.62 L323.0,7.54 L326.0,7.35 L329.0,7.08 L332.0,6.76 L335.0,6.44 L338.0,6.14 L341.0,5.90 L344.0,5.74 L347.0,5.67 L350.0,5.68 L353.0,5.75 L356.0,5.84 L359.0,5.93 L362.0,5.98 L365.0,5.97 L368.0,5.89 L371.0,5.74 L374.0,5.55 L377.0,5.34 L380.0,5.14 L383.0,5.00 L386.0,4.94 L389.0,4.98 L392.0,5.13" stroke="#284547" stroke-width="1.7" fill="none"/><path d="M143.0,9.05 L146.0,9.39 L149.0,9.71 L152.0,9.96 L155.0,10.13 L158.0,10.18 L161.0,10.13 L164.0,9.98 L167.0,9.76 L170.0,9.51 L173.0,9.26 L176.0,9.05 L179.0,8.90 L182.0,8.82 L185.0,8.82 L188.0,8.87 L191.0,8.95 L194.0,9.02 L197.0,9.06 L200.0,9.03 L203.0,8.93 L206.0,8.74 L209.0,8.49 L212.0,8.20 L215.0,7.91 L218.0,7.65 L221.0,7.46 L224.0,7.37 L227.0,7.39 L230.0,7.52 L233.0,7.74 L236.0,8.02 L239.0,8.34 L242.0,8.64 L245.0,8.89 L248.0,9.08 L251.0,9.18 L254.0,9.20 L257.0,9.15 L260.0,9.07 L263.0,8.99 L266.0,8.93 L269.0,8.93 L272.0,9.00 L275.0,9.14 L278.0,9.34 L281.0,9.57 L284.0,9.80 L287.0,9.99 L290.0,10.11 L293.0,10.12 L296.0,10.03 L299.0,9.84 L302.0,9.56 L305.0,9.22 L308.0,8.87 L311.0,8.54 L314.0,8.27 L317.0,8.09 L320.0,7.99 L323.0,7.99 L326.0,8.06 L329.0,8.18 L332.0,8.30 L335.0,8.40 L338.0,8.45 L341.0,8.44 L344.0,8.36 L347.0,8.23 L350.0,8.06 L353.0,7.90 L356.0,7.78 L359.0,7.73 L362.0,7.77 L365.0,7.91 L368.0,8.15 L371.0,8.46 L374.0,8.82 L377.0,9.18 L380.0,9.50 L383.0,9.75 L386.0,9.91 L389.0,9.96 L392.0,9.91" stroke="#284547" stroke-width="1.7" fill="none"/><path d="M143.0,11.87 L146.0,11.57 L149.0,11.31 L152.0,11.11 L155.0,10.98 L158.0,10.94 L161.0,10.96 L164.0,11.03 L167.0,11.11 L170.0,11.17 L173.0,11.18 L176.0,11.12 L179.0,10.99 L182.0,10.79 L185.0,10.55 L188.0,10.30 L191.0,10.07 L194.0,9.90 L197.0,9.82 L200.0,9.85 L203.0,9.99 L206.0,10.23 L209.0,10.53 L212.0,10.87 L215.0,11.21 L218.0,11.50 L221.0,11.72 L224.0,11.85 L227.0,11.89 L230.0,11.85 L233.0,11.76 L236.0,11.66 L239.0,11.56 L242.0,11.50 L245.0,11.51 L248.0,11.59 L251.0,11.73 L254.0,11.90 L257.0,12.09 L260.0,12.25 L263.0,12.35 L266.0,12.36 L269.0,12.27 L272.0,12.07 L275.0,11.79 L278.0,11.45 L281.0,11.09 L284.0,10.75 L287.0,10.46 L290.0,10.26 L293.0,10.15 L296.0,10.15 L299.0,10.23 L302.0,10.36 L305.0,10.53 L308.0,10.68 L311.0,10.80 L314.0,10.85 L317.0,10.84 L320.0,10.76 L323.0,10.65 L326.0,10.52 L329.0,10.42 L332.0,10.38 L335.0,10.41 L338.0,10.54 L341.0,10.76 L344.0,11.05 L347.0,11.40 L350.0,11.75 L353.0,12.07 L356.0,12.32 L359.0,12.48 L362.0,12.52 L365.0,12.47 L368.0,12.32 L371.0,12.12 L374.0,11.89 L377.0,11.67 L380.0,11.49 L383.0,11.37 L386.0,11.33 L389.0,11.36 L392.0,11.43" stroke="#284547" stroke-width="1.7" fill="none"/><path d="M143.0,2.92 L146.0,2.63 L149.0,2.35 L152.0,2.12 L155.0,1.95 L158.0,1.86 L161.0,1.85 L164.0,1.89 L167.0,1.97 L170.0,2.05 L173.0,2.11 L176.0,2.12 L179.0,2.06 L182.0,1.95 L185.0,1.79 L188.0,1.60 L191.0,1.41 L194.0,1.26 L197.0,1.18 L200.0,1.18 L203.0,1.27 L206.0,1.46 L209.0,1.72 L212.0,2.03 L215.0,2.34 L218.0,2.64 L221.0,2.87 L224.0,3.03 L227.0,3.11 L230.0,3.10 L233.0,3.03 L236.0,2.91 L239.0,2.79 L242.0,2.69 L245.0,2.63 L248.0,2.63 L251.0,2.68 L254.0,2.79 L257.0,2.92 L260.0,3.05 L263.0,3.14 L266.0,3.17 L269.0,3.13 L272.0,2.99 L275.0,2.77 L278.0,2.49 L281.0,2.17 L284.0,1.86 L287.0,1.58 L290.0,1.37 L293.0,1.24 L296.0,1.21 L299.0,1.26 L302.0,1.39 L305.0,1.56 L308.0,1.74 L311.0,1.90 L314.0,2.02 L317.0,2.07 L320.0,2.07 L323.0,2.01 L326.0,1.93 L329.0,1.84 L332.0,1.79 L335.0,1.78 L338.0,1.85 L341.0,2.00 L344.0,2.22 L347.0,2.50 L350.0,2.79 L353.0,3.08 L356.0,3.32 L359.0,3.48 L362.0,3.55 L365.0,3.52 L368.0,3.40 L371.0,3.21 L374.0,2.98 L377.0,2.74 L380.0,2.53 L383.0,2.37 L386.0,2.27 L389.0,2.23 L392.0,2.26" stroke="#7ea3a3" stroke-width="0.7" fill="none"/><path d="M143.0,4.58 L146.0,4.54 L149.0,4.44 L152.0,4.31 L155.0,4.18 L158.0,4.06 L161.0,4.01 L164.0,4.03 L167.0,4.13 L170.0,4.33 L173.0,4.59 L176.0,4.90 L179.0,5.22 L182.0,5.51 L185.0,5.75 L188.0,5.91 L191.0,5.98 L194.0,5.95 L197.0,5.85 L200.0,5.69 L203.0,5.52 L206.0,5.35 L209.0,5.22 L212.0,5.15 L215.0,5.14 L218.0,5.18 L221.0,5.27 L224.0,5.36 L227.0,5.43 L230.0,5.45 L233.0,5.41 L236.0,5.28 L239.0,5.08 L242.0,4.82 L245.0,4.52 L248.0,4.23 L251.0,3.97 L254.0,3.78 L257.0,3.67 L260.0,3.66 L263.0,3.75 L266.0,3.92 L269.0,4.13 L272.0,4.37 L275.0,4.59 L278.0,4.77 L281.0,4.89 L284.0,4.94 L287.0,4.93 L290.0,4.87 L293.0,4.80 L296.0,4.75 L299.0,4.73 L302.0,4.77 L305.0,4.89 L308.0,5.07 L311.0,5.30 L314.0,5.55 L317.0,5.80 L320.0,6.00 L323.0,6.13 L326.0,6.17 L329.0,6.11 L332.0,5.96 L335.0,5.73 L338.0,5.46 L341.0,5.17 L344.0,4.91 L347.0,4.70 L350.0,4.56 L353.0,4.49 L356.0,4.50 L359.0,4.55 L362.0,4.63 L365.0,4.70 L368.0,4.74 L371.0,4.73 L374.0,4.65 L377.0,4.52 L380.0,4.34 L383.0,4.14 L386.0,3.96 L389.0,3.82 L392.0,3.75" stroke="#7ea3a3" stroke-width="0.7" fill="none"/><path d="M143.0,8.06 L146.0,8.34 L149.0,8.56 L152.0,8.70 L155.0,8.74 L158.0,8.68 L161.0,8.54 L164.0,8.34 L167.0,8.11 L170.0,7.89 L173.0,7.70 L176.0,7.56 L179.0,7.49 L182.0,7.49 L185.0,7.53 L188.0,7.60 L191.0,7.67 L194.0,7.70 L197.0,7.67 L200.0,7.58 L203.0,7.42 L206.0,7.20 L209.0,6.94 L212.0,6.69 L215.0,6.46 L218.0,6.30 L221.0,6.23 L224.0,6.25 L227.0,6.37 L230.0,6.58 L233.0,6.83 L236.0,7.12 L239.0,7.39 L242.0,7.61 L245.0,7.78 L248.0,7.87 L251.0,7.88 L254.0,7.84 L257.0,7.77 L260.0,7.69 L263.0,7.64 L266.0,7.64 L269.0,7.70 L272.0,7.82 L275.0,8.00 L278.0,8.20 L281.0,8.39 L284.0,8.55 L287.0,8.65 L290.0,8.66 L293.0,8.57 L296.0,8.40 L299.0,8.14 L302.0,7.84 L305.0,7.53 L308.0,7.24 L311.0,7.00 L314.0,6.83 L317.0,6.75 L320.0,6.76 L323.0,6.82 L326.0,6.93 L329.0,7.04 L332.0,7.14 L335.0,7.19 L338.0,7.18 L341.0,7.11 L344.0,6.99 L347.0,6.85 L350.0,6.71 L353.0,6.61 L356.0,6.57 L359.0,6.61 L362.0,6.74 L365.0,6.96 L368.0,7.24 L371.0,7.56 L374.0,7.87 L377.0,8.16 L380.0,8.38 L383.0,8.51 L386.0,8.55 L389.0,8.51 L392.0,8.39" stroke="#7ea3a3" stroke-width="0.7" fill="none"/><path d="M143.0,9.68 L146.0,9.64 L149.0,9.67 L152.0,9.73 L155.0,9.81 L158.0,9.87 L161.0,9.88 L164.0,9.84 L167.0,9.73 L170.0,9.57 L173.0,9.37 L176.0,9.17 L179.0,8.99 L182.0,8.86 L185.0,8.82 L188.0,8.87 L191.0,9.02 L194.0,9.25 L197.0,9.54 L200.0,9.85 L203.0,10.15 L206.0,10.41 L209.0,10.60 L212.0,10.70 L215.0,10.73 L218.0,10.68 L221.0,10.59 L224.0,10.48 L227.0,10.38 L230.0,10.32 L233.0,10.31 L236.0,10.36 L239.0,10.47 L242.0,10.61 L245.0,10.76 L248.0,10.88 L251.0,10.94 L254.0,10.93 L257.0,10.83 L260.0,10.64 L263.0,10.38 L266.0,10.07 L269.0,9.75 L272.0,9.45 L275.0,9.21 L278.0,9.04 L281.0,8.97 L284.0,8.99 L287.0,9.08 L290.0,9.22 L293.0,9.39 L296.0,9.54 L299.0,9.66 L302.0,9.72 L305.0,9.72 L308.0,9.67 L311.0,9.58 L314.0,9.48 L317.0,9.41 L320.0,9.38 L323.0,9.43 L326.0,9.55 L329.0,9.75 L332.0,10.02 L335.0,10.32 L338.0,10.62 L341.0,10.88 L344.0,11.09 L347.0,11.20 L350.0,11.22 L353.0,11.14 L356.0,10.99 L359.0,10.78 L362.0,10.56 L365.0,10.35 L368.0,10.18 L371.0,10.07 L374.0,10.02 L377.0,10.04 L380.0,10.09 L383.0,10.17 L386.0,10.22 L389.0,10.24 L392.0,10.19" stroke="#7ea3a3" stroke-width="0.7" fill="none"/><path d="M302.8 0 H333.7 Q 328 8.6 318 9 Q 308 8.6 302.8 0 Z" fill="#8fb4b4"/><path d="M305 3.6 Q 318 2.2 332 3.4" stroke="#46706f" stroke-width="1.2" fill="none"/><path d="M309 6.6 Q 318 6 328 6.6" stroke="#6b9595" stroke-width="0.9" fill="none"/><polygon points="471.5,0 515.6,0 515.6,4 495,8.5 480,5" fill="#557e7c"/><path d="M420 12 C 424 6, 432 4.6, 440 5 C 447 5.4, 451 7.4, 455 7 C 460 6.4, 462 3, 467 3.2 C 472 3.6, 476 8, 477.5 12 Z" fill="#f0c96a"/><polygon points="485.7,12 496,3.5 508,12" fill="#2f5155"/><polygon points="516.5,0 530,0 531.5,12 512,12" fill="#2f5155"/><polygon points="530,0 540,0 543,12 532.4,12" fill="#8db4b7"/><polygon points="575,0 599.5,0 618.7,12 579,12" fill="#f0c96a"/><polygon points="605,0 609,0 621,12 617,12" fill="#5b8684"/><polygon points="615,0 619,0 631,12 627,12" fill="#5b8684"/><polygon points="625,0 629,0 641,12 637,12" fill="#5b8684"/><polygon points="646,0 650,0 640.7,12 637.5,12" fill="#f0c96a"/><polygon points="654.8,0 667,0 674,12 664.7,12" fill="#f0c96a"/></g></svg>
<!-- sidebar -->
<div class="box" style="left:0;top:284px;width:480px;height:1px;background:#dcd9d5"></div>
<div class="box" style="left:0;top:476px;width:480px;height:1px;background:#dcd9d5"></div>
<div class="box" style="left:0;top:668px;width:480px;height:48px;background:#e4eff6;border-top:1px solid #2d7b9c;border-bottom:1px solid #2d7b9c"></div>
<!-- main tabs -->
<svg class="a" style="left:528px;top:400px" width="640" height="6" viewBox="0 0 640 6"><rect x="0" y="2" width="4" height="1" fill="#bdbab6"/><polygon points="4,1 626.8,1 630,4 4,4" fill="#0f0e0d"/></svg>
<div class="box" style="left:529px;top:357px;width:1328px;height:52px;border:3px solid #ff0000"></div>
<div class="box" style="left:528px;top:412px;width:1331px;height:44px;background:#fff;border:1px solid #8b8885;border-radius:5px"></div>
<svg class="a" style="left:544px;top:422px" width="22" height="22" viewBox="0 0 22 22">
 <circle cx="9.3" cy="9.7" r="6.8" fill="none" stroke="#161513" stroke-width="2"/>
 <path d="M14.2 14.6 L19.4 19.6" stroke="#161513" stroke-width="1.8"/>
</svg>
<div class="box" style="left:602px;top:468px;width:36px;height:36px;border:1px solid #7a7673;border-radius:4px"></div>
<div class="box" style="left:611px;top:485px;width:17px;height:2px;background:#161513"></div>
<div class="box" style="left:619px;top:477px;width:2px;height:18px;background:#161513"></div>
<div class="box" style="left:654px;top:468px;width:114px;height:36px;border:1px solid #a3a09c;border-radius:4px"></div>
<div class="box" style="left:788px;top:468px;width:91px;height:36px;border:1px solid #a3a09c;border-radius:4px"></div>
<div class="box" style="left:1824px;top:468px;width:36px;height:36px;border:1px solid #7a7673;border-radius:4px"></div>
<svg class="a" style="left:1832px;top:476px" width="20" height="20" viewBox="0 0 20 20">
 <path d="M10 1.5 V12" stroke="#161513" stroke-width="1.9" fill="none"/>
 <path d="M5.8 8.2 L10 12.4 L14.2 8.2" stroke="#161513" stroke-width="1.9" fill="none"/>
 <path d="M2.8 12.2 V17.2 H17.2 V12.2" stroke="#161513" stroke-width="1.9" fill="none"/>
</svg>
<!-- table -->
<svg class="a" style="left:538px;top:534px" width="16" height="16" viewBox="0 0 16 16"><rect x="0.75" y="0.75" width="14.5" height="14.5" rx="1.1" fill="none" stroke="#161513" stroke-width="1.5"/></svg>
<svg class="a" style="left:538px;top:595px" width="16" height="16" viewBox="0 0 16 16"><rect x="0.75" y="0.75" width="14.5" height="14.5" rx="1.1" fill="none" stroke="#161513" stroke-width="1.5"/></svg>
<div class="box" style="left:528px;top:568px;width:1344px;height:1px;background:#dedbd7"></div>
<div class="box" style="left:528px;top:637px;width:1344px;height:1px;background:#dedbd7"></div>
<svg class="a" style="left:589px;top:592px" width="48" height="22" viewBox="0 0 48 22">
 <rect x="0" y="0" width="48" height="22" fill="#fff"/>
 <path d="M2.5 22 V3.5 H45.5 V22" fill="none" stroke="#d0d0d0" stroke-width="1.2"/>
 <rect x="39" y="4" width="6" height="18" fill="none" stroke="#c8c8c8" stroke-width="1"/>
 <rect x="39.5" y="18.5" width="5" height="3.5" fill="#8a8a8a"/>
 <path d="M7 22 V17.5 L12 15.8 L20 20 V22 Z" fill="#7a7a7a"/>
</svg>
<div class="box" style="left:1774.5px;top:601px;width:4px;height:4px;border-radius:2px;background:#161513"></div>
<div class="box" style="left:1782.5px;top:601px;width:4px;height:4px;border-radius:2px;background:#161513"></div>
<div class="box" style="left:1790.4px;top:601px;width:4px;height:4px;border-radius:2px;background:#161513"></div>
<svg class="a" style="left:805.1px;top:535px" width="11" height="14" viewBox="0 0 11 14"><path d="M1.1 4.7 L5.5 1.2 L9.9 4.7 M1.1 9.3 L5.5 12.6 L9.9 9.3" fill="none" stroke="#161513" stroke-width="1.55"/></svg><svg class="a" style="left:1006.4px;top:535px" width="11" height="14" viewBox="0 0 11 14"><path d="M1.1 4.7 L5.5 1.2 L9.9 4.7 M1.1 9.3 L5.5 12.6 L9.9 9.3" fill="none" stroke="#161513" stroke-width="1.55"/></svg><svg class="a" style="left:1203.5px;top:535px" width="11" height="14" viewBox="0 0 11 14"><path d="M1.1 4.7 L5.5 1.2 L9.9 4.7 M1.1 9.3 L5.5 12.6 L9.9 9.3" fill="none" stroke="#161513" stroke-width="1.55"/></svg><svg class="a" style="left:1420.1px;top:535px" width="11" height="14" viewBox="0 0 11 14"><path d="M1.1 4.7 L5.5 1.2 L9.9 4.7 M1.1 9.3 L5.5 12.6 L9.9 9.3" fill="none" stroke="#161513" stroke-width="1.55"/></svg><svg class="a" style="left:1643.1px;top:535px" width="11" height="14" viewBox="0 0 11 14"><path d="M1.1 4.7 L5.5 1.2 L9.9 4.7 M1.1 9.3 L5.5 12.6 L9.9 9.3" fill="none" stroke="#161513" stroke-width="1.55"/></svg>
<svg class="a" style="left:18px;top:248px" width="20" height="20" viewBox="0 0 20 20"><rect x="4" y="4" width="12" height="12" rx="0.8" fill="none" stroke="#2b2825" stroke-width="1.6"/><rect x="4.5" y="4.5" width="3.6" height="11" fill="#2b2825"/><rect x="5.3" y="5" width="1.8" height="1.2" fill="#fff"/><rect x="5.3" y="7.3" width="1.8" height="1.4" fill="#bbb"/><rect x="5.3" y="10.2" width="1.8" height="1.1" fill="#fff"/><rect x="5.3" y="12.9" width="1.8" height="2" fill="#fff"/><rect x="9" y="4.9" width="6.2" height="10.2" fill="#fff"/></svg><svg class="a" style="left:18px;top:344px" width="20" height="20" viewBox="0 0 20 20"><path d="M4 16 V4 H6.6 V7.6 L11.2 5.6 V8 L16 5.6 V16 Z" fill="none" stroke="#2b2825" stroke-width="1.6" stroke-linejoin="round"/><rect x="4" y="14.2" width="12" height="2" fill="#555"/><rect x="5.9" y="11.2" width="2.6" height="2.6" rx="0.6" fill="none" stroke="#2b2825" stroke-width="1.2"/><rect x="11.3" y="11.2" width="2.6" height="2.6" rx="0.6" fill="none" stroke="#2b2825" stroke-width="1.2"/></svg><svg class="a" style="left:18px;top:392px" width="20" height="20" viewBox="0 0 20 20"><path d="M10 16.2 L6.6 10.6 A4.3 4.3 0 1 1 13.4 10.6 Z" fill="none" stroke="#2b2825" stroke-width="1.5" stroke-linejoin="round"/><circle cx="10" cy="7.9" r="1.5" fill="#666" stroke="#2b2825" stroke-width="0.9"/></svg><svg class="a" style="left:18px;top:440px" width="20" height="20" viewBox="0 0 20 20"><path d="M12.6 4 H4 V16 H6.2 V11.6 H7.2" fill="none" stroke="#2b2825" stroke-width="1.6"/><circle cx="6.6" cy="6.6" r="0.75" fill="#2b2825"/><circle cx="9.4" cy="6.6" r="0.75" fill="#2b2825"/><circle cx="6.6" cy="9.4" r="0.75" fill="#2b2825"/><circle cx="12.6" cy="9.2" r="2.1" fill="none" stroke="#2b2825" stroke-width="1.3"/><path d="M9.5 16.6 V15.6 A3.2 2.5 0 0 1 15.9 15.6 V16.6" fill="none" stroke="#2b2825" stroke-width="1.3"/></svg><svg class="a" style="left:18px;top:536px" width="20" height="20" viewBox="0 0 20 20"><rect x="4" y="4" width="12" height="12" rx="0.6" fill="none" stroke="#2b2825" stroke-width="1.6"/><rect x="6.8" y="6.6" width="3.8" height="3.8" rx="0.5" fill="none" stroke="#2b2825" stroke-width="1.2"/><circle cx="13.4" cy="6.5" r="0.75" fill="#2b2825"/><circle cx="13.4" cy="8.5" r="0.75" fill="#2b2825"/><circle cx="13.4" cy="10.5" r="0.75" fill="#2b2825"/><path d="M6.6 13.4 H13.6" stroke="#2b2825" stroke-width="1.2"/></svg><svg class="a" style="left:18px;top:584px" width="20" height="20" viewBox="0 0 20 20"><path d="M8.4 16 H4 V4 H14.6 V10.6" fill="none" stroke="#2b2825" stroke-width="1.6"/><circle cx="6.6" cy="7.3" r="0.8" fill="#2b2825"/><path d="M9.2 7.3 H12.6" stroke="#2b2825" stroke-width="1.2"/><path d="M6.6 9.4 V10.6" stroke="#555" stroke-width="1.1"/><path d="M9.2 10 H12.6" stroke="#555" stroke-width="1.5"/><polygon points="13.5,11.6 16.2,16.8 10.9,16.8" fill="#161513"/></svg><svg class="a" style="left:18px;top:632px" width="20" height="20" viewBox="0 0 20 20"><path d="M4 15.6 V5.3 A1 1 0 0 1 5 4.4 H15.6 A1 1 0 0 1 16.4 5.4 V11.6 A1 1 0 0 1 15.4 12.6 H7.1 Z" fill="none" stroke="#2b2825" stroke-width="1.6" stroke-linejoin="round"/></svg><svg class="a" style="left:18px;top:680px" width="20" height="20" viewBox="0 0 20 20"><path d="M14.2 5.2 V12 A4.1 4.1 0 0 1 6 12 V6.6 A2.75 2.75 0 0 1 11.5 6.6 V11.8 A1.45 1.45 0 0 1 8.6 11.8 V8" fill="none" stroke="#2b2825" stroke-width="1.35"/></svg>
<svg class="a" style="left:20px;top:302px" width="16" height="12" viewBox="0 0 16 12"><path d="M1.8 3 L8.1 9 L14.4 3" fill="none" stroke="#161513" stroke-width="2"/></svg><svg class="a" style="left:20px;top:494px" width="16" height="12" viewBox="0 0 16 12"><path d="M1.8 3 L8.1 9 L14.4 3" fill="none" stroke="#161513" stroke-width="2"/></svg>
<span class="t" style="left:48.75px;top:77.90px;font-size:17.0px;font-weight:700;color:#f0cc71;transform:scaleX(0.8736);">Go to Businesses</span>
<span class="t" style="left:48.50px;top:117.10px;font-size:29px;font-weight:700;color:#ffffff;transform:scaleX(0.8903);">Business:</span>
<span class="t" style="left:181.90px;top:117.10px;font-size:29px;font-weight:700;color:#ffffff;transform:scaleX(0.9221);">LEGALNAME_1_PSR_CHECKAUDITHISTORY_BE</span>
<span class="t" style="left:821.50px;top:117.10px;font-size:29px;font-weight:700;color:#ffffff;transform:scaleX(0.7453);">.</span>
<span class="t" style="left:836.25px;top:117.10px;font-size:29px;font-weight:700;color:#ffffff;transform:scaleX(1.0196);">BEN-2025-002467</span>
<span class="t" style="left:48.50px;top:155.50px;font-size:13.5px;font-weight:700;color:#ffffff;transform:scaleX(1.0353);">addr1,addr2,Manhattan,10010</span>
<span class="t" style="left:1504.50px;top:81.10px;font-size:14.5px;font-weight:700;color:#ffffff;transform:scaleX(0.9125);">View License Certificates</span>
<span class="t" style="left:1713.30px;top:80.80px;font-size:14.5px;font-weight:700;color:#ffffff;transform:scaleX(0.9106);">Apply for New License</span>
<span class="t" style="left:1103.80px;top:123.90px;font-size:14.5px;font-weight:400;color:#161513;transform:scaleX(0.9544);">Active</span>
<span class="t" style="left:56.40px;top:252.80px;font-size:14.5px;font-weight:400;color:#161513;transform:scaleX(0.9372);">Business Overview</span>
<span class="t" style="left:56.40px;top:298.70px;font-size:14.0px;font-weight:700;color:#161513;transform:scaleX(0.9710);">Business Information</span>
<span class="t" style="left:56.40px;top:348.70px;font-size:14.0px;font-weight:400;color:#161513;transform:scaleX(0.9652);">Business Details</span>
<span class="t" style="left:56.40px;top:396.00px;font-size:15.0px;font-weight:400;color:#161513;transform:scaleX(0.9252);">Locations</span>
<span class="t" style="left:56.40px;top:445.00px;font-size:14.5px;font-weight:400;color:#161513;transform:scaleX(0.9329);">Owners</span>
<span class="t" style="left:56.40px;top:491.10px;font-size:14.5px;font-weight:700;color:#161513;transform:scaleX(0.9037);">Progress</span>
<span class="t" style="left:56.40px;top:540.00px;font-size:15.0px;font-weight:400;color:#161513;transform:scaleX(0.8834);">Licenses</span>
<span class="t" style="left:56.40px;top:589.00px;font-size:14.5px;font-weight:400;color:#161513;transform:scaleX(0.9818);">Audit History</span>
<span class="t" style="left:56.40px;top:636.10px;font-size:15.0px;font-weight:400;color:#161513;transform:scaleX(0.9453);">Communication</span>
<span class="t" style="left:56.40px;top:684.80px;font-size:14.5px;font-weight:400;color:#161513;transform:scaleX(0.9677);">Attachments</span>
<span class="t" style="left:528.10px;top:253.00px;font-size:29.5px;font-weight:700;color:#161513;transform:scaleX(0.9505);">Attachments</span>
<span class="t" style="left:810.60px;top:370.90px;font-size:17.0px;font-weight:700;color:#161513;transform:scaleX(0.8598);">Business</span>
<span class="t" style="left:1472.90px;top:370.80px;font-size:17.0px;font-weight:400;color:#4f4c49;transform:scaleX(1.0009);">License Activity</span>
<span class="t" style="left:581.50px;top:425.00px;font-size:17.0px;font-weight:400;color:#6f6c69;transform:scaleX(0.8895);">Search</span>
<span class="t" style="left:540.90px;top:476.90px;font-size:16.5px;font-weight:400;color:#161513;transform:scaleX(0.9878);">1 item</span>
<span class="t" style="left:679.60px;top:477.00px;font-size:15.0px;font-weight:700;color:#a09c98;transform:scaleX(0.8765);">Download</span>
<span class="t" style="left:813.60px;top:477.00px;font-size:15.0px;font-weight:700;color:#a09c98;transform:scaleX(0.9000);">Delete</span>
<span class="t" style="left:718.90px;top:532.90px;font-size:16.5px;font-weight:700;color:#161513;transform:scaleX(0.9391);">File Name</span>
<span class="t" style="left:933.70px;top:532.90px;font-size:16.5px;font-weight:700;color:#161513;transform:scaleX(0.9023);">File Size</span>
<span class="t" style="left:1105.40px;top:533.00px;font-size:16.5px;font-weight:700;color:#161513;transform:scaleX(0.9322);">Description</span>
<span class="t" style="left:1313.30px;top:533.00px;font-size:16.5px;font-weight:700;color:#161513;transform:scaleX(0.9291);">Uploaded By</span>
<span class="t" style="left:1533.60px;top:533.00px;font-size:16.5px;font-weight:700;color:#161513;transform:scaleX(0.9440);">Uploaded On</span>
<span class="t" style="left:1763.30px;top:533.00px;font-size:16.5px;font-weight:700;color:#161513;transform:scaleX(0.9157);">Actions</span>
<span class="t" style="left:718.90px;top:594.30px;font-size:17.0px;font-weight:400;color:#1b6d8a;transform:scaleX(0.9621);">3D_Property.pdf</span>
<span class="t" style="left:933.70px;top:594.30px;font-size:17.0px;font-weight:400;color:#161513;transform:scaleX(0.9458);">360.53 KB</span>
<span class="t" style="left:1105.40px;top:594.30px;font-size:17.0px;font-weight:400;color:#161513;transform:scaleX(0.9190);">Reference doc</span>
<span class="t" style="left:1313.30px;top:594.30px;font-size:17.0px;font-weight:400;color:#161513;transform:scaleX(0.9055);">Joe Green</span>
<span class="t" style="left:1533.60px;top:594.30px;font-size:17.0px;font-weight:400;color:#161513;transform:scaleX(1.0364);">11/5/25 9:52 PM</span>
</body></html>
